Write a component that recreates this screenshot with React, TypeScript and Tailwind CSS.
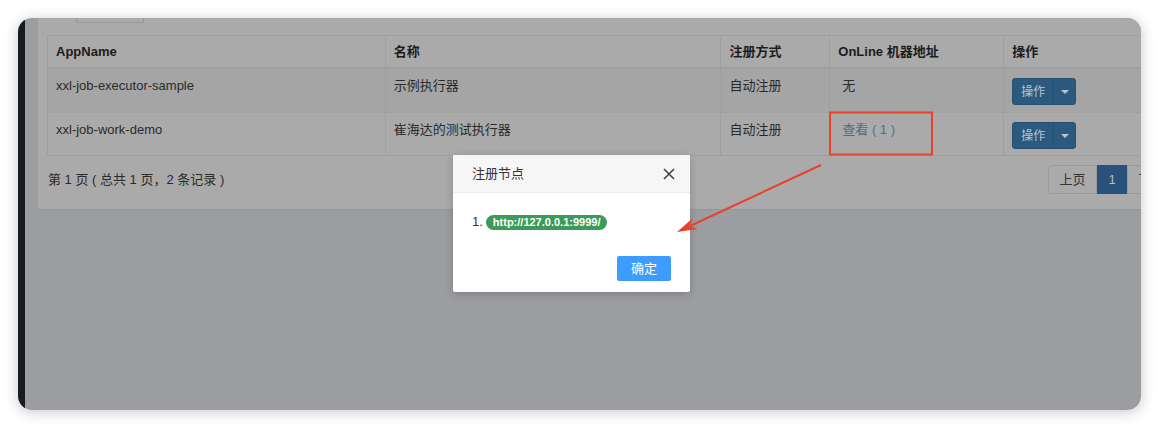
import React from 'react';

const font = { fontFamily: '"Liberation Sans", "Noto Sans CJK SC", sans-serif' };

// column widths of the executor table
const cols = [338, 336, 109, 174, 172];

const rows = [
	{ app: 'xxl-job-executor-sample', name: '示例执行器', type: '自动注册', addr: '无', link: false, striped: true },
	{ app: 'xxl-job-work-demo', name: '崔海达的测试执行器', type: '自动注册', addr: '查看 ( 1 )', link: true, striped: false },
];

function OpButton() {
	return (
		<div className="flex h-[27px] w-[64px] overflow-hidden rounded-[3px] border border-[#27506f] bg-[#2c5a7e] text-[12px] text-[#b9c6d1]">
			<div className="flex w-[40px] items-center justify-center">操作</div>
			<div className="flex flex-1 items-center justify-center border-l border-[#27506f]">
				<span className="block h-0 w-0 border-x-[4px] border-t-[4px] border-x-transparent border-t-[#b9c6d1]" />
			</div>
		</div>
	);
}

function Table() {
	return (
		<div className="border-l border-t border-[#a0a0a0]" style={{ width: cols.reduce((a, b) => a + b, 0) }}>
			<div className="flex h-[33px] border-b-2 border-[#9e9e9e] font-bold text-[#1c1c1c]">
				{['AppName', '名称', '注册方式', 'OnLine 机器地址', '操作'].map((h, i) => (
					<div key={h} className="flex items-center border-r border-[#a0a0a0] px-[8px]" style={{ width: cols[i] }}>
						{h}
					</div>
				))}
			</div>
			{rows.map((r, idx) => (
				<div
					key={r.app}
					className={`flex border-b border-[#a0a0a0] text-[#2a2a2a] ${r.striped ? 'bg-[#a5a5a5]' : 'bg-[#aaaaaa]'} ${idx === 0 ? 'h-[44px]' : 'h-[43px]'}`}
				>
					<div className="border-r border-[#a0a0a0] px-[8px] pt-[7px] leading-[20px]" style={{ width: cols[0] }}>{r.app}</div>
					<div className="border-r border-[#a0a0a0] px-[8px] pt-[7px] leading-[20px]" style={{ width: cols[1] }}>{r.name}</div>
					<div className="border-r border-[#a0a0a0] px-[8px] pt-[7px] leading-[20px]" style={{ width: cols[2] }}>{r.type}</div>
					<div className={`border-r border-[#a0a0a0] px-[12px] pt-[7px] leading-[20px] ${r.link ? 'text-[#4a6f8c]' : ''}`} style={{ width: cols[3] }}>
						{r.addr}
					</div>
					<div className="px-[8px] pt-[9px]" style={{ width: cols[4] }}>
						<OpButton />
					</div>
				</div>
			))}
		</div>
	);
}

function Modal() {
	return (
		<div className="absolute left-[428px] top-[137px] w-[237px] rounded-[2px] bg-white shadow-[0_2px_8px_rgba(0,0,0,0.2)]">
			<div className="flex h-[38px] items-center justify-between border-b border-[#ececec] bg-[#f6f6f6] pl-[19px] pr-[15px] text-[13px] text-[#333]">
				<span>注册节点</span>
				<svg width="12" height="12" viewBox="0 0 12 12" className="text-[#444]">
					<path d="M1 1L11 11M11 1L1 11" stroke="currentColor" strokeWidth="1.6" />
				</svg>
			</div>
			<div className="px-[19px] pb-[11px] pt-[20px]">
				<div className="flex h-[18px] items-center gap-[3px] text-[13px] text-[#333]">
					<span>1.</span>
					<span className="flex h-[15px] items-center rounded-full bg-[#3c9b5a] px-[7px] text-[11px] font-bold text-white">
						http://127.0.0.1:9999/
					</span>
				</div>
				<div className="mt-[25px] flex justify-end">
					<div className="flex h-[25px] w-[54px] items-center justify-center rounded-[2px] bg-[#3d9cfd] text-[13px] text-white">
						确定
					</div>
				</div>
			</div>
		</div>
	);
}

export default function App() {
	return (
		<div className="relative h-[429px] w-[1159px] overflow-hidden bg-white pl-[18px] pt-[18px] text-[13px]" style={font}>
			<div className="flex h-[392px] w-[1123px] overflow-hidden rounded-[14px] shadow-[0_2px_14px_rgba(0,0,0,0.22)]">
				<div className="w-[7px] shrink-0 bg-[#151b1e]" />
				<div className="relative flex-1 bg-[#9c9da1] pl-[13px]">
					<div className="h-[192px] w-[1160px] border-b border-[#959595] bg-[#aaaaaa] pl-[9px]">
						<div className="ml-[29px] h-[5px] w-[68px] border border-t-0 border-[#979797]" />
						<div className="mt-[12px]">
							<Table />
						</div>
						<div className="ml-[1px] mt-[9px] flex w-[1128px] items-center justify-between">
							<span className="text-[#2a2a2a]">第 1 页 ( 总共 1 页，2 条记录 )</span>
							<div className="flex h-[29px] text-[#333]">
								<div className="flex w-[49px] items-center justify-center rounded-l-[3px] border border-[#9a9a9a]">上页</div>
								<div className="flex w-[30px] items-center justify-center bg-[#2a5179] text-[#b0bfcc]">1</div>
								<div className="flex w-[49px] items-center justify-center border border-[#9a9a9a]">下页</div>
							</div>
						</div>
					</div>
					<Modal />
				</div>
			</div>
			{/* annotation: red box and arrow */}
			<svg className="absolute left-0 top-0" width="1159" height="429" viewBox="0 0 1159 429">
				<rect x="830" y="112.5" width="102" height="42" fill="none" stroke="#e8412c" strokeWidth="2" />
				<line x1="821" y1="165" x2="690" y2="226" stroke="#e8412c" strokeWidth="2" />
				<polygon points="677,232 692.6,218.2 689.6,226.1 697.6,229" fill="#e8412c" />
			</svg>
		</div>
	);
}
